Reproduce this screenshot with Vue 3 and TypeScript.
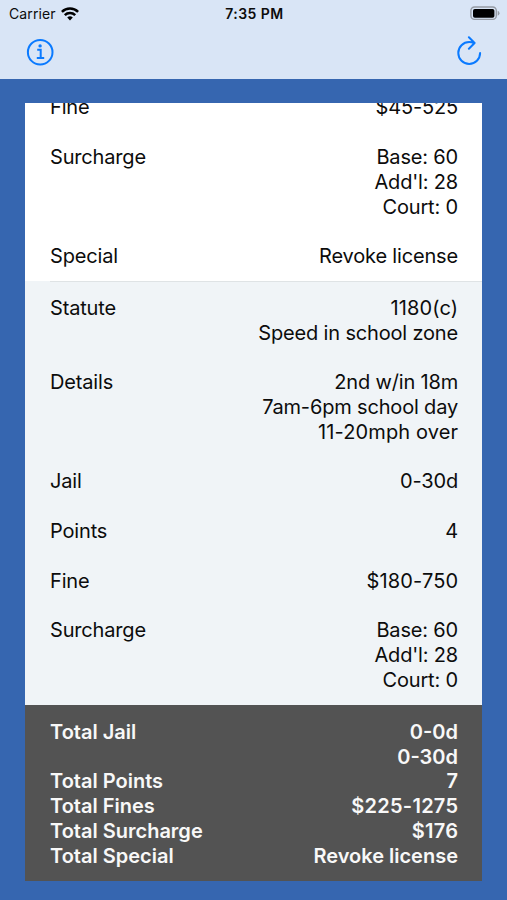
<script setup lang="ts">
interface Row { label: string; values: string[] }
const first: Row[] = [
  { label: 'Fine', values: ['$45-525'] },
  { label: 'Surcharge', values: ['Base: 60', "Add'l: 28", 'Court: 0'] },
  { label: 'Special', values: ['Revoke license'] },
]
const second: Row[] = [
  { label: 'Statute', values: ['1180(c)', 'Speed in school zone'] },
  { label: 'Details', values: ['2nd w/in 18m', '7am-6pm school day', '11-20mph over'] },
  { label: 'Jail', values: ['0-30d'] },
  { label: 'Points', values: ['4'] },
  { label: 'Fine', values: ['$180-750'] },
  { label: 'Surcharge', values: ['Base: 60', "Add'l: 28", 'Court: 0'] },
]
const totals: Row[] = [
  { label: 'Total Jail', values: ['0-0d', '0-30d'] },
  { label: 'Total Points', values: ['7'] },
  { label: 'Total Fines', values: ['$225-1275'] },
  { label: 'Total Surcharge', values: ['$176'] },
  { label: 'Total Special', values: ['Revoke license'] },
]
const isFigure = (v: string): boolean => /^(\$.*1|1)/.test(v)
</script>

<template>
  <div class="screen">
    <header class="top">
      <div class="status">
        <div class="carrier">
          <span>Carrier</span>
          <svg width="18" height="14" viewBox="0 0 18 14" fill="none" stroke="#000" stroke-width="2.5">
            <path d="M.9 4.8a11.5 11.5 0 0 1 16.2 0M3.8 8.1a7.4 7.4 0 0 1 10.4 0" />
            <path d="M9 13.4 6.2 10.5a4 4 0 0 1 5.6 0Z" fill="#000" stroke="none" />
          </svg>
        </div>
        <span class="time">7:35 PM</span>
        <svg class="battery" width="31" height="15" viewBox="0 0 31 15">
          <rect x="1.9" y="1" width="25.4" height="12.4" rx="3.6" fill="none" stroke="#959ba4" stroke-width="1.4" />
          <rect x="4" y="2.9" width="21.4" height="8.8" rx="1.8" />
          <path d="M28.7 4.8v5q1.8-.8 1.8-2.5t-1.8-2.5" fill="#959ba4" />
        </svg>
      </div>
      <nav class="bar">
        <svg width="28" height="28" viewBox="0 0 28 28" fill="none" stroke="#0a7aff" stroke-width="2">
          <circle cx="14.2" cy="14.2" r="12.3" />
          <path d="M11.2 11.8h3.5v8M10.8 20.1h7.4" />
          <circle cx="14.1" cy="7.9" r="1.7" fill="#0a7aff" stroke="none" />
        </svg>
        <svg width="26" height="32" viewBox="0 0 26 32" fill="none" stroke="#0a7aff" stroke-width="2" stroke-linecap="round" stroke-linejoin="round">
          <path d="M18 7.2Q15.8 6.1 13.2 6.1A10.9 10.9 0 1 0 24.1 17M12.9 1.3l5.7 5.7-5.7 5.7" />
        </svg>
      </nav>
    </header>
    <main class="content">
      <section class="card">
        <div class="group first">
          <div v-for="r in first" :key="r.label" class="row">
            <span>{{ r.label }}</span>
            <div class="values"><span v-for="v in r.values" :key="v" :class="{ figure: isFigure(v) }">{{ v }}</span></div>
          </div>
        </div>
        <div class="group second">
          <hr class="separator">
          <div v-for="r in second" :key="r.label" class="row">
            <span>{{ r.label }}</span>
            <div class="values"><span v-for="v in r.values" :key="v" :class="{ figure: isFigure(v) }">{{ v }}</span></div>
          </div>
        </div>
        <div class="totals">
          <div v-for="r in totals" :key="r.label" class="row">
            <span>{{ r.label }}</span>
            <div class="values"><span v-for="v in r.values" :key="v" :class="{ figure: isFigure(v) }">{{ v }}</span></div>
          </div>
        </div>
      </section>
    </main>
  </div>
</template>

<style>
body { margin: 0; }
</style>
<style scoped>
.screen { width: 507px; height: 900px; overflow: hidden; display: flex; flex-direction: column; background: #3666b0; font-family: Inter, "Liberation Sans", sans-serif; color: #0c0c0c; }
.top { height: 79px; flex: none; background: #d9e5f6; }
.status { height: 27px; display: grid; grid-template-columns: 1fr auto 1fr; align-items: center; padding: 0 7px 0 9px; box-sizing: border-box; font-size: 14px; }
.carrier { display: flex; align-items: center; gap: 5px; letter-spacing: .12px; }
.time { font-weight: 600; letter-spacing: .45px; }
.battery { justify-self: end; }
.bar { height: 50px; display: flex; justify-content: space-between; align-items: center; padding: 0 25px 0 26px; }
.content { flex: 1; min-height: 0; padding: 24px 25px 19px; }
.card { height: 778px; overflow: hidden; display: flex; flex-direction: column; justify-content: flex-end; }
.group { flex: none; display: flex; flex-direction: column; gap: 24.8px; padding: 0 24px 0 25px; background: #fff; letter-spacing: -.17px; }
.first { padding-bottom: 12.4px; }
.second { background: #f0f4f7; padding-top: 0; padding-bottom: 12.4px; }
.separator { width: 100%; height: 1px; border: 0; margin: 0 -24px -11.2px 0; background: #dfe3e5; align-self: stretch; width: auto; }
.totals { flex: none; background: #535353; color: #f8f8f8; padding: 14.8px 24px 12.4px 25px; font-weight: 600; }
.row { display: flex; justify-content: space-between; font-size: 20px; line-height: 24.8px; }
.values { display: flex; flex-direction: column; text-align: right; }
.figure { letter-spacing: .25px; margin-right: -.25px; }
.group .figure { letter-spacing: .14px; }
</style>
